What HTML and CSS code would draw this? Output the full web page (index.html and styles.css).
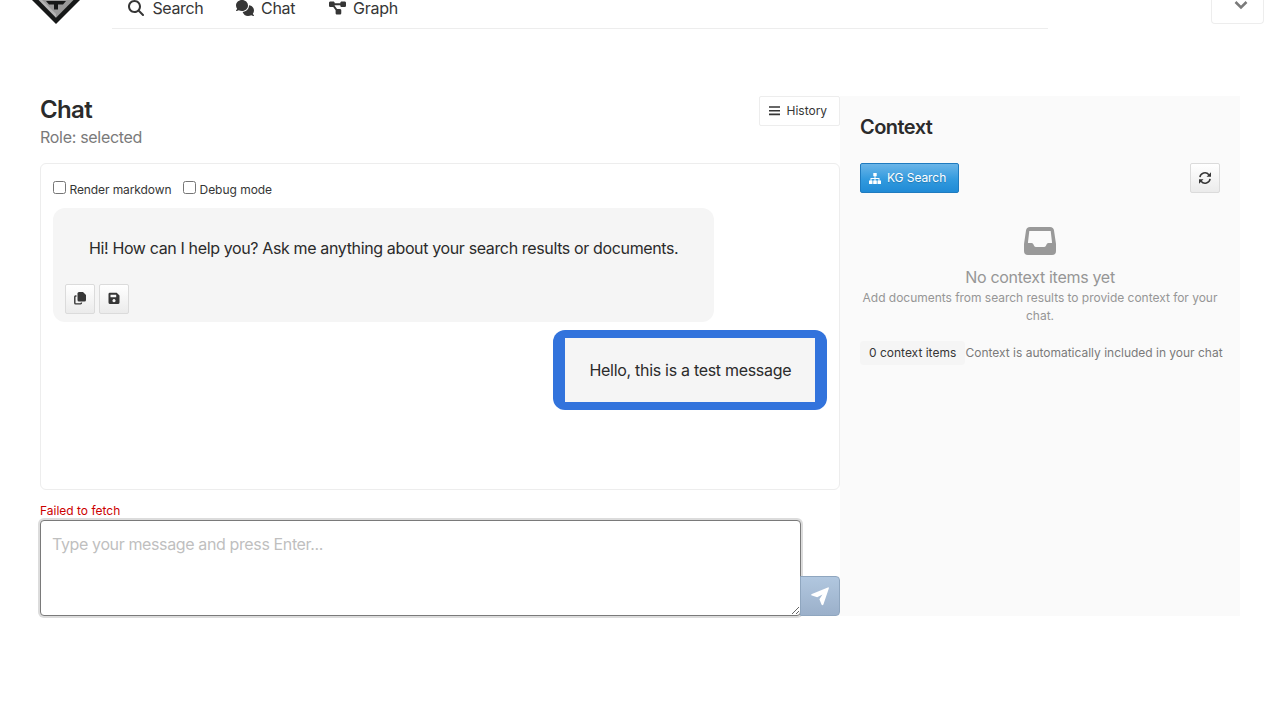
FILE: index.html
```html
<!DOCTYPE html>
<html lang="en"><head><meta charset="utf-8"><title>Chat</title><link rel="stylesheet" href="styles.css"></head>
<body>
<header class="topbar">
  <svg class="logo" viewBox="0 0 48 24"><path fill="#161818" d="M0 0H48L24 24z"/><path fill="#999" d="M6.500 0H41.500L24 17.800z"/><path fill="#b5b5b5" d="M7 0H10L24 14V17.500z"/><path fill="#161818" d="M14 1H34L31 4.500H26V9.500H22V4.500H17z"/></svg>
  <nav class="nav">
    <a class="nav-item"><svg class="i-search" viewBox="0 0 512 512"><path d="M416 208c0 45.900-14.900 88.300-40 122.700L502.600 457.400c12.500 12.500 12.500 32.800 0 45.300s-32.800 12.500-45.300 0L330.700 376c-34.400 25.200-76.800 40-122.700 40C93.100 416 0 322.900 0 208S93.100 0 208 0S416 93.100 416 208zM208 352a144 144 0 1 0 0-288 144 144 0 1 0 0 288z"/></svg><span class="t-search">Search</span></a>
    <a class="nav-item"><svg class="i-chat" viewBox="0 0 576 512"><path d="M192 352c106 0 192-78.800 192-176S298 0 192 0S0 78.800 0 176c0 38.600 13.700 74.300 36.600 103.400c-3.500 12-13 27-24 38C3 327-1.400 334.400 .8 340.900S6.100 352 13 352c21.800 0 51-10 73-24C117 343.300 154 352 192 352zM416 176c0 112.300-94 200-204 207C235 457.400 302 512 384 512c38.200 0 73.900-8.700 104.700-23.900c22 14 52 23.900 74.300 23.900c6.900 0 10.100-4.500 12.200-11.100c2.100-6.600-.2-13.800-11.800-24c-11-11-20.500-26-24-38c22.900-29 36.600-64.700 36.600-103.400c0-86-68-155-160.600-164.500z"/></svg><span class="t-chat">Chat</span></a>
    <a class="nav-item"><svg class="i-graph" viewBox="0 0 576 512"><path d="M0 80C0 53.500 21.500 32 48 32h96c26.500 0 48 21.500 48 48V96H384V80c0-26.500 21.500-48 48-48h96c26.500 0 48 21.500 48 48v96c0 26.500-21.500 48-48 48H432c-26.500 0-48-21.500-48-48V160H192v16c0 1.700-.1 3.400-.3 5L272 288h96c26.500 0 48 21.500 48 48v96c0 26.500-21.500 48-48 48H272c-26.500 0-48-21.500-48-48V336c0-1.700 .1-3.400 .3-5L144 224H48c-26.500 0-48-21.500-48-48V80z"/></svg><span class="t-graph">Graph</span></a>
  </nav>
  <button class="dropdown"><svg viewBox="0 0 14 8"><path d="M1.500 1L7 6.500L12.500 1" fill="none" stroke="#7a7a7a" stroke-width="2.500"/></svg></button>
</header>
<main class="layout">
  <section class="chat">
    <div class="chat-head">
      <div><h1>Chat</h1><p class="role">Role: selected</p></div>
      <button class="btn history"><svg viewBox="0 0 11 10"><path d="M0 1H11M0 4.700H11M0 8.400H11" stroke="#363636" stroke-width="1.600"/></svg><span>History</span></button>
    </div>
    <div class="messages">
      <div class="options"><label><input type="checkbox"><span class="t-md">Render markdown</span></label><label><input type="checkbox"><span class="t-debug">Debug mode</span></label></div>
      <div class="bot"><p>Hi! How can I help you? Ask me anything about your search results or documents.</p>
        <div class="actions">
          <button class="btn square"><svg viewBox="0 0 12 13"><path d="M5 0H9L12 3V8Q12 9.500 10.500 9.500H5Q3.500 9.500 3.500 8V1.500Q3.500 0 5 0z"/><path d="M2.500 4H1.500Q.8 4 .8 4.800V11Q.8 11.900 1.700 11.900H6.500Q7.500 11.900 7.500 10.500" fill="none" stroke="#363636" stroke-width="1.400"/></svg></button>
          <button class="btn square"><svg viewBox="0 0 12 13"><path fill-rule="evenodd" d="M1.800 .8H8.700L11.500 3.600V10.400Q11.500 12 9.900 12H2.100Q.5 12 .5 10.400V2.200Q.5 .8 1.800 .8zM2.500 2.800V5.300H8.200V2.800zM6 7.100A1.600 1.600 0 1 0 6.010 7.100z"/></svg></button>
        </div>
      </div>
      <div class="user"><p>Hello, this is a test message</p></div>
    </div>
    <p class="error">Failed to fetch</p>
    <div class="composer"><textarea placeholder="Type your message and press Enter..."></textarea><button class="send"><svg viewBox="0 0 18 19"><path d="M16.800 .4Q18.200 0 17.800 1.400L12.400 17.500Q11.500 19 10.500 17.500L8.400 12.200L11.500 7.500L6.200 10.300L.9 8.600Q-.7 7.700 .9 6.900z"/></svg></button></div>
  </section>
  <aside class="context">
    <h2>Context</h2>
    <div class="tools"><button class="btn kg"><svg viewBox="0 0 12 11"><path d="M4.300 0H7.700V3.300H6.500V5H10.500V7.500H12V11H8.500V7.500H9.500V6H6.500V7.500H7.800V11H4.200V7.500H5.500V6H2.500V7.500H3.500V11H0V7.500H1.500V5H5.500V3.300H4.300z"/></svg><span>KG Search</span></button>
    <button class="btn square"><svg class="i-sync" viewBox="0 0 12 12"><g fill="none" stroke="#363636" stroke-width="1.500"><path d="M.9 5.200A5.100 5.100 0 0 1 9.900 2.700M11.100 6.800A5.100 5.100 0 0 1 2.100 9.300"/></g><path d="M12 .2V4.700H7.500zM0 11.800V7.300H4.500z"/></svg></button></div>
    <div class="empty"><svg viewBox="0 0 32 28"><path fill-rule="evenodd" d="M6 0H26Q29.500 0 30 3.500L32 17V24Q32 28 28 28H4Q0 28 0 24V17L2 3.500Q2.500 0 6 0zM5.300 4L3.900 16H7.500Q8.600 16 9.200 17L10.200 19Q10.800 20 12 20H20Q21.200 20 21.800 19L22.800 17Q23.400 16 24.500 16H28.100L26.700 4z"/></svg><p class="empty-title">No context items yet</p><p class="empty-text">Add documents from search results to provide context for your<br>chat.</p></div>
    <div class="summary"><span class="tag">0 context items</span><span class="note">Context is automatically included in your chat</span></div>
  </aside>
</main>
</body></html>
```
FILE: styles.css
```css
*{box-sizing:border-box}
body{margin:0;height:720px;overflow:hidden;background:#fff;color:#363636;font:16px/24px Inter,sans-serif;letter-spacing:-.3px}
h1,h2,p{margin:0}
button{font:inherit;letter-spacing:inherit;padding:0}
svg{display:block;fill:#363636;flex:none}
.topbar{display:flex;height:29px;align-items:flex-start}
.logo{width:48px;height:24px;margin-left:32px}
.nav{display:flex;width:936px;height:29px;margin-left:32px;padding-left:16px;border-bottom:1px solid #ededed}
.nav-item{display:flex;align-items:center;height:24px;margin-top:-4px;white-space:nowrap}
.nav-item svg{height:16px}
.i-search{width:16px;margin-right:8.500px}
.i-chat{width:18px;margin-right:7px}
.i-graph{width:17px;margin-right:7.500px}
.nav-item span{display:block}
.t-search{width:83.500px;letter-spacing:-.4px}.t-chat{width:67.500px}.t-graph{letter-spacing:-.25px}
.dropdown{display:flex;align-items:flex-start;width:53px;height:24px;margin-left:163px;padding:.5px 0 0 22px;border:1px solid #ededed;border-top:0;border-radius:0 0 4px 4px;background:#fff}
.dropdown svg{width:14px;height:8px;overflow:visible}
.layout{display:flex;width:1200px;height:520px;margin:67px 0 0 40px}
.chat{width:800px}
.chat-head{display:flex;justify-content:space-between;height:67px}
h1,h2,.bot,.user{color:#2b2b2b}
h1{font-size:24px;font-weight:600;line-height:27px;letter-spacing:-.65px}
.role{color:#7a7a7a;line-height:24px;margin-top:2px}
.btn{display:flex;align-items:center;height:30px;border:1px solid #dbdbdb;border-radius:2px;background:#fff;font-size:12px;color:#363636;letter-spacing:0}
.history{width:81px;border-color:#ededed;padding-left:9px;gap:6.500px}
.history svg{width:11px;height:10px}
.messages{height:327px;border:1px solid #ededed;border-radius:6px;padding:14px 12px}
.options{display:flex;height:30px;font-size:12px;letter-spacing:-.1px;gap:12px}
.options label{display:flex;height:22px;align-items:center;gap:3.500px;white-space:nowrap}
.options input{width:13px;height:13px;margin:0 0 3px}
.options span{padding-top:1px}
.t-md{width:101.500px}
.t-debug{letter-spacing:-.03px}
.bot{width:661px;height:114px;border-radius:12px;background:#f5f5f5;padding:28px 12px 8px;letter-spacing:-.365px}
.bot p{padding-left:24px;white-space:nowrap}
.actions{display:flex;gap:4px;margin-top:24px}
.square{width:30px;justify-content:center;background:linear-gradient(#fff,#ebebeb)}
.square svg{width:12px;height:13px}
.actions svg{margin-bottom:1px}
.user{width:274px;height:80px;margin:8px 0 0 500px;padding:8px 12px;border-radius:12px;background:#3273dc}
.user p{height:64px;padding:20px 24.500px;background:#f5f5f5;white-space:nowrap}
.error{height:30px;color:#c00;font-size:12px;line-height:18px;letter-spacing:0;padding-top:12px}
.composer{display:flex;align-items:flex-end;height:96px}
textarea{display:block;width:761px;height:96px;border:1px solid #7a7a7a;border-radius:4px;padding:11px;box-shadow:0 0 0 2px #dcdcdc;font:inherit;letter-spacing:-.375px;resize:vertical;outline:0}
textarea::placeholder{color:#bfbfbf}
.send{width:40px;height:40px;margin-left:-1px;border:1px solid #8fa6bf;border-radius:0 4px 4px 0;background:linear-gradient(#b1c7df,#9bb0ca);z-index:1}
.send svg{width:18px;height:19px;fill:#fff;margin:0 auto}
.context{width:400px;background:#fafafa;padding:20px}
h2{font-size:20px;font-weight:600;line-height:22px;letter-spacing:-.55px}
.tools{display:flex;justify-content:space-between;margin-top:25px}
.kg{width:99px;padding-left:8px;gap:6px;border-color:#1f7bbf;background:linear-gradient(#6bb5e8,#329ade 55%,#208bd6);color:#fff}
.kg svg{width:12px;height:11px;fill:#fff}
.kg span{text-shadow:0 1px 1px rgba(0,0,0,.2);letter-spacing:-.07px}
.square .i-sync{height:12px}
.empty{display:flex;flex-direction:column;align-items:center;margin-top:34px;color:#969696}
.empty svg{width:32px;height:28px;fill:#999}
.empty-title{margin-top:10px}
.empty-text{font-size:12px;line-height:18px;letter-spacing:-.03px;text-align:center;white-space:nowrap}
.summary{display:flex;align-items:center;margin-top:16px;font-size:12px;letter-spacing:0;white-space:nowrap}
.tag{flex:none;width:105px;height:24px;padding-left:9px;border-radius:4px;background:#f5f5f5}
.note{color:#7a7a7a;padding-left:.5px;letter-spacing:-.01px}
```
